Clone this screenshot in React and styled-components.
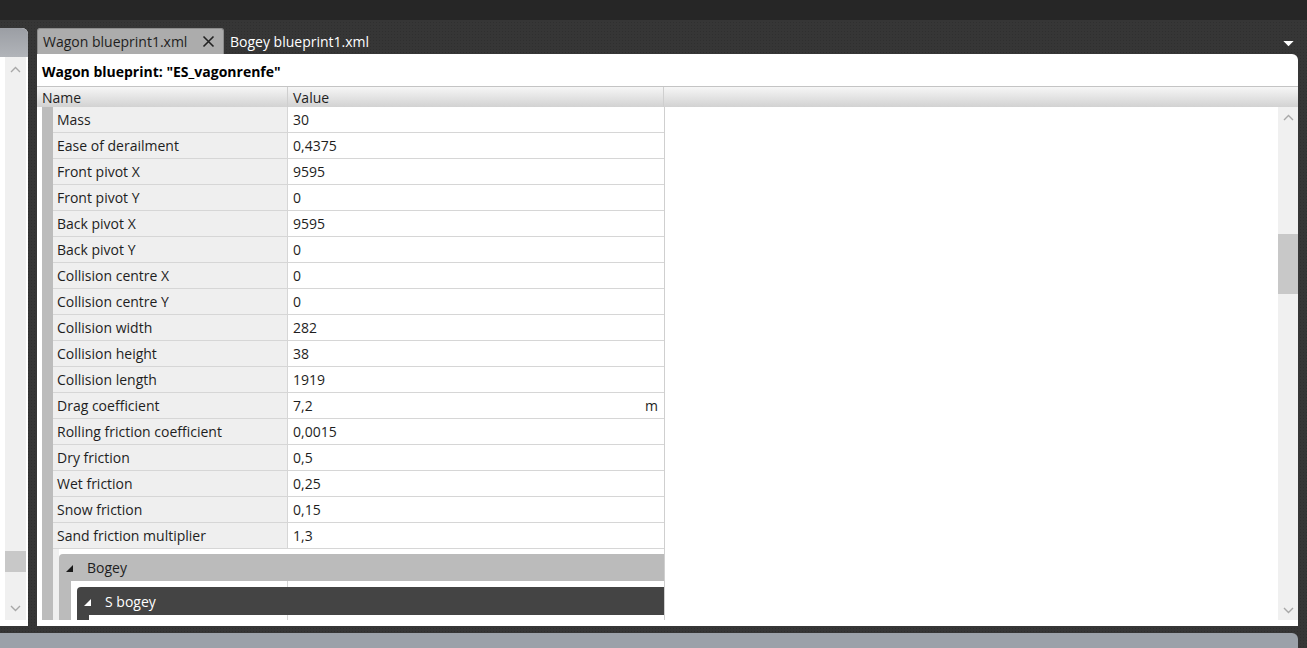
import React from "react";
import styled, { createGlobalStyle } from "styled-components";

const GlobalStyle = createGlobalStyle`
  html, body {
    margin: 0;
    padding: 0;
    background: #2b2b2b;
    overflow: hidden;
  }
  body {
    font-family: "Open Sans", "Noto Sans", sans-serif;
    font-size: 14px;
    color: #1e1e1e;
  }
`;

const rows = [
  ["Mass", "30"],
  ["Ease of derailment", "0,4375"],
  ["Front pivot X", "9595"],
  ["Front pivot Y", "0"],
  ["Back pivot X", "9595"],
  ["Back pivot Y", "0"],
  ["Collision centre X", "0"],
  ["Collision centre Y", "0"],
  ["Collision width", "282"],
  ["Collision height", "38"],
  ["Collision length", "1919"],
  ["Drag coefficient", "7,2", "m"],
  ["Rolling friction coefficient", "0,0015"],
  ["Dry friction", "0,5"],
  ["Wet friction", "0,25"],
  ["Snow friction", "0,15"],
  ["Sand friction multiplier", "1,3"],
];

function Chevron({ down }) {
  return (
    <svg width="11" height="7" viewBox="0 0 11 7">
      <path
        d={down ? "M1 1 L5.5 5.5 L10 1" : "M1 6 L5.5 1.5 L10 6"}
        fill="none"
        stroke="#a8a8a8"
        strokeWidth="1.4"
      />
    </svg>
  );
}

function App() {
  return (
    <Screen>
      <GlobalStyle />
      <TopBar />
      <Workspace>
        <SidePanel>
          <SideHeader />
          <SideBody>
            <VScroll>
              <ScrollArrow>
                <Chevron />
              </ScrollArrow>
              <Track>
                <Thumb $top={470} $height={21} />
              </Track>
              <ScrollArrow>
                <Chevron down />
              </ScrollArrow>
            </VScroll>
          </SideBody>
        </SidePanel>

        <MainColumn>
          <TabStrip>
            <Tab $active>
              Wagon blueprint1.xml
              <CloseIcon viewBox="0 0 13 13">
                <path d="M1.5 1.5 L11.5 11.5 M11.5 1.5 L1.5 11.5" stroke="#222222" strokeWidth="1.6" />
              </CloseIcon>
            </Tab>
            <Tab>Bogey blueprint1.xml</Tab>
            <TabMenu viewBox="0 0 12 7">
              <path d="M0 0 L12 0 L6 6 Z" fill="#ffffff" />
            </TabMenu>
          </TabStrip>

          <Document>
            <Title>Wagon blueprint: "ES_vagonrenfe"</Title>
            <HeaderRow>
              <HeadCell $w={251}>Name</HeadCell>
              <HeadCell $w={376} $pad={5}>Value</HeadCell>
              <HeadCell $flex />
            </HeaderRow>

            <Body>
              <Grid>
                {rows.map(([name, value, unit]) => (
                  <Row key={name}>
                    <Strip />
                    <NameCell>{name}</NameCell>
                    <ValueCell>
                      <span>{value}</span>
                      {unit && <span>{unit}</span>}
                    </ValueCell>
                  </Row>
                ))}

                <GroupArea>
                  <Strip />
                  <Indent />
                  <Group>
                    <GroupHeader $tone="light">
                      <Arrow $color="#1a1a1a" />
                      Bogey
                    </GroupHeader>
                    <GroupInner>
                      <GroupStrip />
                      <GroupContent>
                        <GapRow>
                          <GapName />
                          <GapValue />
                        </GapRow>
                        <SubGroup>
                          <GroupHeader $tone="dark">
                            <Arrow $color="#ffffff" />
                            S bogey
                          </GroupHeader>
                          <SubInner>
                            <SubStrip />
                            <SubContent>
                              <GapName $w={198} />
                              <GapValue />
                            </SubContent>
                          </SubInner>
                        </SubGroup>
                      </GroupContent>
                    </GroupInner>
                  </Group>
                </GroupArea>
              </Grid>

              <Filler />

              <VScroll $wide>
                <ScrollArrow $h={20}>
                  <Chevron />
                </ScrollArrow>
                <Track>
                  <Thumb $top={107} $height={60} />
                </Track>
                <ScrollArrow $h={20}>
                  <Chevron down />
                </ScrollArrow>
              </VScroll>
            </Body>
          </Document>
        </MainColumn>
      </Workspace>
      <BottomBand />
      <StatusBar />
    </Screen>
  );
}

const Screen = styled.div`
  width: 1307px;
  height: 648px;
  display: flex;
  flex-direction: column;
  overflow: hidden;
  background-color: #363636;
  background-image: radial-gradient(#2f2f2f 0.8px, transparent 1px);
  background-size: 3px 3px;
`;

const TopBar = styled.div`
  height: 20px;
  flex: none;
  background: #262626;
`;

const Workspace = styled.div`
  flex: none;
  height: 598px;
  padding-top: 8px;
  display: flex;
  gap: 9px;
  padding-right: 9px;
`;

const SidePanel = styled.div`
  width: 28px;
  flex: none;
  display: flex;
  flex-direction: column;
  background: #ffffff;
  border-top-right-radius: 6px;
  overflow: hidden;
`;

const SideHeader = styled.div`
  height: 29px;
  flex: none;
  background: linear-gradient(#9b9ea4, #b1b4b9);
`;

const SideBody = styled.div`
  flex: 1;
  display: flex;
  padding: 0 2px 6px 5px;
`;

const VScroll = styled.div`
  width: ${(p) => (p.$wide ? 20 : 21)}px;
  flex: none;
  display: flex;
  flex-direction: column;
  background: #f0f0f0;
`;

const ScrollArrow = styled.div`
  height: ${(p) => p.$h || 24}px;
  flex: none;
  display: flex;
  align-items: center;
  justify-content: center;
`;

const Track = styled.div`
  flex: 1;
  position: relative;
`;

const Thumb = styled.div`
  position: absolute;
  left: 0;
  right: 0;
  top: ${(p) => p.$top}px;
  height: ${(p) => p.$height}px;
  background: #c8c8c8;
`;

const MainColumn = styled.div`
  flex: 1;
  display: flex;
  flex-direction: column;
  min-width: 0;
`;

const TabStrip = styled.div`
  height: 26px;
  flex: none;
  display: flex;
  align-items: stretch;
`;

const Tab = styled.div`
  display: flex;
  align-items: center;
  flex: none;
  gap: 10px;
  padding: 0 8px 0 5px;
  font-size: 14px;
  white-space: nowrap;
  color: ${(p) => (p.$active ? "#1e1e1e" : "#ffffff")};
  background: ${(p) => (p.$active ? "#acacac" : "transparent")};
  border: 1px solid ${(p) => (p.$active ? "#8c8c8c" : "transparent")};
  border-bottom: none;
  border-radius: 3px 3px 0 0;
  width: ${(p) => (p.$active ? "187px" : "auto")};
  box-sizing: border-box;
  justify-content: ${(p) => (p.$active ? "space-between" : "flex-start")};
`;

const CloseIcon = styled.svg`
  width: 13px;
  height: 13px;
  flex: none;
`;

const TabMenu = styled.svg`
  width: 11px;
  height: 6px;
  margin: 13px 4px 0 auto;
`;

const Document = styled.div`
  flex: 1;
  display: flex;
  flex-direction: column;
  background: #ffffff;
  border-top-right-radius: 6px;
  padding-bottom: 6px;
  min-height: 0;
`;

const Title = styled.div`
  height: 33px;
  flex: none;
  box-sizing: border-box;
  padding: 8px 0 0 5px;
  font-weight: 700;
  font-size: 14px;
  color: #000;
  border-bottom: 1px solid #c4c4c4;
`;

const HeaderRow = styled.div`
  height: 20px;
  flex: none;
  display: flex;
  background: linear-gradient(#f6f6f6, #e6e6e6 45%, #d2d2d2);
`;

const HeadCell = styled.div`
  width: ${(p) => (p.$flex ? "auto" : `${p.$w}px`)};
  flex: ${(p) => (p.$flex ? 1 : "none")};
  box-sizing: border-box;
  padding-left: ${(p) => p.$pad || 5}px;
  line-height: 21px;
  font-size: 14px;
  border-right: ${(p) => (p.$flex ? "none" : "1px solid #cfcfcf")};
  color: #1e1e1e;
`;

const Body = styled.div`
  flex: 1;
  display: flex;
  min-height: 0;
  overflow: hidden;
`;

const Grid = styled.div`
  width: 627px;
  flex: none;
  display: flex;
  flex-direction: column;
  border-right: 1px solid #cfcfcf;
`;

const Row = styled.div`
  height: 26px;
  flex: none;
  display: flex;
  padding-left: 5px;
`;

const Strip = styled.div`
  width: 11px;
  flex: none;
  background: #bcbcbc;
`;

const NameCell = styled.div`
  width: 235px;
  flex: none;
  box-sizing: border-box;
  padding-left: 4px;
  line-height: 25px;
  background: #efefef;
  border-bottom: 1px solid #d6d6d6;
  border-right: 1px solid #d6d6d6;
`;

const ValueCell = styled.div`
  flex: 1;
  display: flex;
  justify-content: space-between;
  padding: 0 6px 0 5px;
  line-height: 25px;
  border-bottom: 1px solid #d6d6d6;
`;

const GroupArea = styled.div`
  flex: 1;
  display: flex;
  padding-left: 5px;
  min-height: 0;
`;

const Indent = styled.div`
  width: 6px;
  flex: none;
  background: #efefef;
`;

const Group = styled.div`
  flex: 1;
  display: flex;
  flex-direction: column;
  padding-top: 5px;
`;

const GroupHeader = styled.div`
  height: ${(p) => (p.$tone === "dark" ? 28 : 27)}px;
  flex: none;
  display: flex;
  align-items: center;
  font-size: 14px;
  border-top-left-radius: 4px;
  background: ${(p) => (p.$tone === "dark" ? "#444444" : "#bbbbbb")};
  color: ${(p) => (p.$tone === "dark" ? "#ffffff" : "#1e1e1e")};
`;

const Arrow = styled.span`
  width: 0;
  height: 0;
  margin: 2px 14px 0 7px;
  border-left: 7px solid transparent;
  border-bottom: 7px solid ${(p) => p.$color};
`;

const GroupInner = styled.div`
  flex: 1;
  display: flex;
`;

const GroupStrip = styled.div`
  width: 12px;
  flex: none;
  background: #bbbbbb;
`;

const GroupContent = styled.div`
  flex: 1;
  display: flex;
  flex-direction: column;
  padding-left: 6px;
`;

const GapRow = styled.div`
  height: 6px;
  flex: none;
  display: flex;
`;

const GapName = styled.div`
  width: ${(p) => p.$w || 210}px;
  flex: none;
  border-right: 1px solid #d6d6d6;
`;

const GapValue = styled.div`
  flex: 1;
`;

const SubGroup = styled.div`
  flex: 1;
  display: flex;
  flex-direction: column;
`;

const SubInner = styled.div`
  flex: 1;
  display: flex;
`;

const SubStrip = styled.div`
  width: 12px;
  flex: none;
  background: #444444;
`;

const SubContent = styled.div`
  flex: 1;
  display: flex;
`;

const Filler = styled.div`
  flex: 1;
`;

const BottomBand = styled.div`
  height: 7px;
  flex: none;
`;

const StatusBar = styled.div`
  flex: 1;
  margin-right: 9px;
  background: #9ba1a9;
  border-top-right-radius: 6px;
`;

export default App;
